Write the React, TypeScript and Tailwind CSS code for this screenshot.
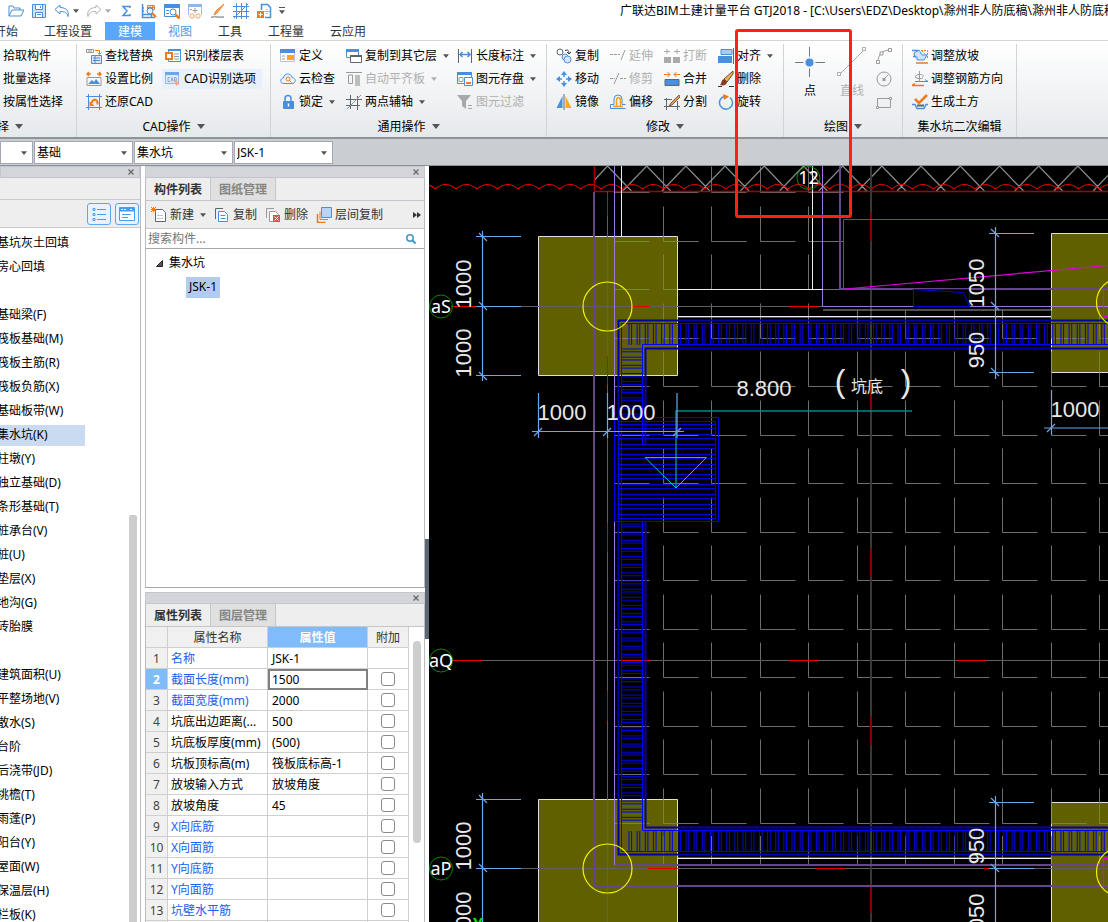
import type { ReactNode } from 'react';

const B = '#4a8fdd';
const O = '#ee7a1c';
const G = '#9a9a9a';
const K = '#5c6670';

const icons: Record<string, ReactNode> = {
  open: <path d="M1 13V3h4l1 2h6v2M1 13l3-6h12l-3 6z" stroke={B} />,
  save: <><path d="M1.5 1.5h13v13h-13z" stroke={B} fill="#cfe2f8" /><path d="M4.500 1.500h7v5h-7zM4.500 9.500h7v5h-7z" stroke={B} fill="#fff" /><path d="M9.500 3v2M6 11.500h4" stroke={B} /></>,
  undo: <path d="M6 2L1 6.500 6 11V8.500c5 0 7 1 8 5C15.500 8 12 4.500 6 4.500z" stroke={B} />,
  redo: <path d="M10 2l5 4.500-5 4.500V8.500c-5 0-7 1-8 5C.5 8 4 4.500 10 4.500z" stroke="#b4b4b4" />,
  sum: <path d="M12 5V3.500H5L9 8l-4 4.500h7V11" stroke={B} strokeWidth="1.500" />,
  ruler: <><path d="M1.500 1v13.500H14M1.500 11.500h9v3M1 5h2M1 8h2" stroke={B} strokeWidth="1.500" /><path d="M6.500 2.500h7v4h-7zM9 2v4M11.500 2v4M6 4.500h8" stroke={O} /><circle cx="9" cy="8" r="3" stroke={B} fill="#e4effc" /><path d="M11 10l4 4" stroke={O} strokeWidth="2" /></>,
  find: <><path d="M.5 1.500h15v12H.5z" stroke={B} /><path d="M0 1h16v4H0z" fill={B} /><path d="M2 7.500h3M2 10.500h3" stroke={B} /><circle cx="9" cy="9" r="3" stroke={B} fill="#fff" /><path d="M11.500 11.500l4 4" stroke={O} strokeWidth="2.500" /></>,
  glasses: <><path d="M1.500 1v11M14.500 1v11" stroke="#9bbfe8" /><path d="M1 1h14v3H1z" fill="#8db8ea" /><path d="M8 5v5M5.500 7.500h5M3 6.500h2" stroke={G} /><circle cx="5" cy="13" r="2.200" stroke="#f2a163" /><circle cx="11" cy="13" r="2.200" stroke="#f2a163" /></>,
  brush: <><path d="M14 1L7 10l-3 2 2-4z" stroke={O} fill="#f7b374" /><path d="M1 14.500c3-1.500 5 0 13-.5" stroke={K} /></>,
  mesh: <path d="M3.500 0v16M8.500 0v16M13.500 0v16M0 3.500h16M0 8.500h16M0 13.500h16M1 15L15 1" stroke={B} />,
  docAdd: <><path d="M5.500 7V1.500h6l3 3v10H9" stroke={B} strokeWidth="1.500" /><path d="M1 8h7v7H1z" fill={O} /><path d="M2.500 11.500h4M4.500 9.500v4" stroke="#fff" /><path d="M11 6v5M8.500 8.500h5" stroke={B} strokeDasharray="1 1" /></>,
  replace: <><path d="M.5 1.500h7v3h-7zM3 1.500v3M5 1.500v3" stroke={G} /><path d="M9 2.500h4.500V6M11.500 4.500l2 2 2-2" stroke={O} /><path d="M5.500 7.500h10v8h-10z" stroke={B} fill="#d8e8fa" /><path d="M7 10h7M7 12.500h7M9 8v7" stroke={B} /></>,
  scale: <><path d="M1 3h4M3 1L1 3l2 2M15 3h-4M13 1l2 2-2 2" stroke={O} strokeWidth="1.500" /><path d="M1 6.500h14v8H1z" stroke={G} fill="#f4f8fd" /><path d="M2 13l4-4 2 2 2-3 4 5z" fill={B} /></>,
  restore: <><path d="M2.500 0v16M13.500 0v16M0 2.500h16M0 13.500h16" stroke={B} /><path d="M3.500 7v5h5z" fill={O} /><path d="M5.500 9C7 4 12 5 11.500 10.500" stroke={O} strokeWidth="2" /></>,
  floorTable: <><path d="M3.500 1.500h12v12h-12z" stroke={B} /><path d="M3 1h13v2H3z" fill={B} /><path d="M1 5h6v6H1z" fill="#fff" stroke={O} strokeWidth="2" /><path d="M9 6h5M9 8.500h5M9 11h5" stroke={G} /></>,
  cadOpt: <><path d="M.5 1.500h13v11H.5z" stroke="#8db8ea" fill="#dceafb" /><path d="M0 1h14v3H0z" fill="#6ba6ea" /><path d="M5 6.500H3v4h2M6 10.500l1-4 1 4M9.500 6.500v4h1.500l.5-2-.5-2z" stroke="#8ba9cf" /><path d="M10 8l5 5-2.500.5-1.500 2z" fill="#f4a98a" /></>,
  define: <><path d="M.5 1.500h14v12H.5z" stroke="#b9c4d0" fill="#fff" /><path d="M0 1h15v4H0z" fill={B} /><path d="M7 7h7v5H7z" fill="#f6a52e" /><path d="M2 8h3M2 11h3" stroke={G} /></>,
  cloud: <><path d="M4 12.500C-.5 12.500 0 7 3.500 7 4 1.500 11.500 2 12 6.500c4.500.5 4 6 0 6z" stroke={B} fill="#eef5fd" /><circle cx="8" cy="8" r="2" stroke={O} /><path d="M9.500 9.500l2 2" stroke={O} /></>,
  lock: <><path d="M5 7V4.500a3 3 0 016 0V7" stroke={B} strokeWidth="1.500" /><rect x="3" y="7" width="11" height="8" rx="1" fill={B} /><path d="M8.500 9.500v3" stroke="#fff" strokeWidth="1.500" /></>,
  copyLayer: <><path d="M.5 1.500h12v8H.5z" stroke={B} fill="#fff" /><path d="M0 1h13v3H0z" fill={B} /><path d="M4.500 7.500h11v7h-11z" stroke={K} fill="#fff" /><path d="M4 7h12v2H4z" fill={K} /></>,
  align: <><path d="M0 1.500h16" stroke={G} /><path d="M2.500 4h4v8.500h-4z" stroke={G} /><path d="M9 4h5v11H9z" fill="#bdbdbd" /></>,
  axis: <><path d="M4.500 1v14M11.500 2v14M0 5.500h16M0 11.500h14" stroke={K} /><path d="M1 15L15 1" stroke={O} /></>,
  dim: <><path d="M1.500 1v14M14.500 1v14" stroke={K} /><path d="M3 6.500h10M5.500 4L3 6.500 5.500 9M10.500 4L13 6.500 10.500 9" stroke={B} strokeWidth="1.500" /></>,
  store: <><path d="M.5 1.500h14v11H.5z" stroke={B} fill="#fff" /><path d="M0 1h15v3H0z" fill={B} /><path d="M2 6.500h4v4H2z" stroke={G} /><path d="M7.500 6.500h8v8h-8z" stroke={B} fill="#fff" /><path d="M9 12h5" stroke={O} strokeWidth="2" /></>,
  filter: <><path d="M0 1h14L9 7v8l-4-3V7z" fill="#a9a9a9" /><path d="M11 11.500h4M11 14.500h4" stroke="#a9a9a9" /></>,
  copy: <><circle cx="4" cy="4" r="3" stroke={K} /><path d="M9 2.500c3-1 4 0 4 3M11 4l2 2 2-2" stroke="#333" /><circle cx="9" cy="9" r="3" stroke={B} fill="#d8e8fa" /><circle cx="11.500" cy="11.500" r="3.500" stroke={B} fill="#d8e8fa" /></>,
  move: <><path d="M8 0l3 4H5zM8 16l3-4H5zM0 8l4-3v6zM16 8l-4-3v6z" fill={B} /><path d="M8 4v2M8 10v2M4 8h2M10 8h2" stroke={B} strokeWidth="1.500" /></>,
  mirror: <><path d="M6.500 2v12H.5z" fill={B} /><path d="M9.500 2v12h6z" fill="#f7ab20" /><path d="M8 0v16" stroke={K} /></>,
  extend: <><path d="M0 6.500h10" strokeDasharray="3 1" stroke={G} /><path d="M15 2l-4 10" stroke={G} /></>,
  trim: <><path d="M0 7.500h5M10 7.500h6" stroke={G} strokeDasharray="3 1" /><path d="M9 2L4 13" stroke={G} /></>,
  offset: <><path d="M.5 14.500h15M.5 14.500v-4h3.500V5a4 4 0 018 0v5.500h3.500" stroke={B} /><path d="M3 12.500h10M6.500 12V6c0-3 4-3 4 0v6" stroke="#f7a01f" strokeWidth="1.500" /></>,
  brk: <><path d="M0 9h7v6H0zM9 9h7v6H9z" fill="#aaa" /><path d="M0 3.500h6M3 1v5M10 3.500h6M13 1v5" stroke="#aaa" /></>,
  merge: <><path d="M1 8.500h14v6H1z" fill={B} stroke={K} /><path d="M0 3.500h6M3.500 1L6 3.500 3.500 6M16 3.500h-6M12.500 1L10 3.500 12.500 6" stroke={O} /></>,
  split: <><path d="M2.500 4v12M0 5.500h8M0 12.500h16M13.500 7v9" stroke={K} /><path d="M15 1L7 9l-2 3 3-1 8-8z" stroke="#8d5b33" fill="#d9a06b" /></>,
  alignTo: <><path d="M3 1.500h11v5H3z" fill="#a9cbf2" stroke={B} /><path d="M0 8h14v7H0z" fill={B} /><path d="M15.500 0v16" stroke={K} /></>,
  del: <><path d="M15 0L6 8l3 3 6-8z" fill="#f0b052" stroke="#6b4a2b" /><path d="M6 8c-3 1-2 4-4 6 3 1 7 0 7-3z" fill="#8a3a22" /><path d="M0 15.500h4M11 15.500h5" stroke="#333" /></>,
  rotate: <><path d="M6 2.500a6.500 6.500 0 106 1" stroke={B} strokeWidth="1.500" /><path d="M5 0l6 2.500L6 6z" fill={O} /></>,
  arc: <><path d="M2 14C2 7 6 2 14 2" stroke={G} /><path d="M.5 12.500h3v3h-3zM4 4h3v3H4zM12.500.5h3v3h-3z" fill="#fff" stroke={G} /></>,
  circle: <><circle cx="8" cy="8" r="7" stroke={G} /><path d="M8 8l4-4" stroke={G} /><path d="M6.500 7h3v3h-3z" fill={G} /></>,
  rect: <><path d="M1.500 4.500h13v9h-13z" stroke={G} /><path d="M.5 12.500h2v2h-2zM13.500 3.500h2v2h-2z" fill="#fff" stroke={G} /></>,
  slope: <><path d="M2 5l5-3 3 5h5l-3 5H5V9H3z" fill="#cfe3fa" stroke={B} /><path d="M0 2.500h6M1 8.500h3" stroke={B} strokeWidth="1.500" /><path d="M9 2.500h6.500V10M10 3l5 5" stroke={O} strokeDasharray="2 1" /><path d="M4 15h12" stroke={O} strokeWidth="1.500" /></>,
  bar: <><path d="M7.500 0v10M4 7C1 3 13 2 11 6M3 6c2 2 6 2 8 1" stroke={G} /><path d="M3 10.500h13M13 8.500l3 2" stroke={B} /><path d="M0 14.500h12M3 12.500l-3 2" stroke={O} strokeWidth="1.500" /></>,
  earth: <><path d="M3 5l4 4 8-8" stroke={O} strokeWidth="2.500" /><path d="M0 10.500h3l2 4h7l2-4h2" stroke={B} strokeWidth="1.500" /><path d="M5 11.500h7" stroke={K} strokeWidth="2" /></>,
  add: <><path d="M4.500 2.500h7l3 3v9h-10z" stroke={K} fill="#fff" /><path d="M6 8.500h6M6 11.500h6" stroke="#b9c4d0" /><path d="M0 0l5 5M5 0L0 5M2.500 0v5M0 2.500h5" stroke={O} /></>,
  docCopy: <><path d="M1.500 12V1.500H9" stroke={K} /><path d="M4.500 4.500h6l3 3v7h-9z" stroke={B} fill="#fff" /><path d="M6.500 8.500h5M6.500 11.500h5" stroke={B} /></>,
  docDel: <><path d="M1.500 11V1.500H9" stroke={G} /><path d="M4.500 4.500h6l3 3v7h-9z" stroke={G} fill="#fff" /><path d="M8 8h7v7H8z" fill="#d8504f" /><path d="M9.500 9.500l4 4M13.500 9.500l-4 4" stroke="#fff" /></>,
  layers: <><path d="M1.500 7v8.500h8" stroke={O} strokeWidth="1.500" /><path d="M4 4.500v8h8" stroke={O} /><path d="M5.500.5h10v10h-10z" stroke={B} fill="#b5d5fa" /></>,
};

function Icon({ name }: { name: string }) {
  return (
    <svg width="16" height="16" viewBox="0 0 16 16" fill="none" className="shrink-0" aria-hidden="true">
      {icons[name]}
    </svg>
  );
}

function Caret({ light = false, big = false }: { light?: boolean; big?: boolean }) {
  return (
    <svg width={big ? 8 : 6} height={big ? 5 : 4} viewBox="0 0 8 5" className="shrink-0" aria-hidden="true">
      <path d="M0 0h8L4 5z" fill={light ? '#b0b0b0' : '#555'} />
    </svg>
  );
}

type Tool = { icon?: string; label: string; off?: boolean; caret?: boolean; on?: boolean };

function ToolButton({ icon, label, off, caret, on }: Tool) {
  return (
    <button className={`flex h-[23px] items-center ${off ? 'text-[#b0b0b0]' : 'text-black'}`}>
      <span className={`flex h-5 items-center gap-[3px] ${on ? 'bg-[#e6f1fd] -ml-[3px] pl-[3px] pr-[6px]' : ''}`}>
        {icon && <Icon name={icon} />}
        {label}
      </span>
      {caret && <span className="ml-[6px] flex"><Caret light={off} /></span>}
    </button>
  );
}

function Column({ className, tools }: { className?: string; tools: Tool[] }) {
  return (
    <div className={`flex shrink-0 flex-col items-start ${className ?? ''}`}>
      {tools.map((t) => <ToolButton key={t.label} {...t} />)}
    </div>
  );
}

function Group({ className, label, caret = true, children }: { className: string; label: string; caret?: boolean; children: ReactNode }) {
  return (
    <section className={`flex shrink-0 flex-col border-r border-[#d0d3d7] ${className}`}>
      <div className="flex h-[69px] pl-[9px]">{children}</div>
      <div className="flex h-6 items-center justify-center gap-[6px] pt-[3px]">
        {label}
        {caret && <Caret big />}
      </div>
    </section>
  );
}

function TitleBar() {
  return (
    <header className="flex h-[21px] shrink-0 items-center overflow-hidden bg-white pl-2">
      <div className="flex shrink-0 items-center gap-[7px]">
        <button aria-label="打开"><Icon name="open" /></button>
        <button aria-label="保存"><Icon name="save" /></button>
        <button aria-label="撤销" className="flex items-center gap-[3px]"><Icon name="undo" /><Caret /></button>
        <button aria-label="恢复" className="flex items-center gap-[3px]"><Icon name="redo" /><Caret light /></button>
        <button aria-label="汇总"><Icon name="sum" /></button>
        <button aria-label="测量"><Icon name="ruler" /></button>
        <button aria-label="查找"><Icon name="find" /></button>
        <button aria-label="查看"><Icon name="glasses" /></button>
        <button aria-label="格式刷"><Icon name="brush" /></button>
        <button aria-label="网格"><Icon name="mesh" /></button>
        <button aria-label="新增"><Icon name="docAdd" /></button>
        <button aria-label="自定义" className="flex flex-col items-center gap-[2px]"><span className="h-px w-[6px] bg-[#555]" /><Caret /></button>
      </div>
      <h1 className="ml-[335px] whitespace-nowrap">广联达BIM土建计量平台 GTJ2018 - [C:\Users\EDZ\Desktop\滁州非人防底稿\滁州非人防底稿]</h1>
    </header>
  );
}

const tabs = [
  { name: '工程设置', style: 'w-[74px] text-[#333]' },
  { name: '建模', style: 'w-[50px] bg-[#58a7f8] text-white' },
  { name: '视图', style: 'w-[50px] text-[#4a9cf0]' },
  { name: '工具', style: 'w-[50px] text-[#333]' },
  { name: '工程量', style: 'w-[62px] text-[#333]' },
  { name: '云应用', style: 'w-[62px] text-[#333]' },
];

function Ribbon() {
  return (
    <div className="shrink-0">
      <nav className="flex h-5 border-b border-[#d4d7da] bg-white pt-px">
        <button className="-ml-[6px] mr-[13px] w-6 whitespace-nowrap pt-[2px] text-[#333]">开始</button>
        {tabs.map((t) => <button key={t.name} className={`shrink-0 pt-[2px] ${t.style}`}>{t.name}</button>)}
      </nav>
      <div className="flex h-[98px] overflow-hidden whitespace-nowrap border-b-2 border-[#8f9499] bg-linear-to-b from-white to-[#e6e9ec] pt-[3px]">
        <section className="w-[77px] shrink-0 border-r border-[#d0d3d7]">
          <Column className="pl-[3px]" tools={[{ label: '拾取构件' }, { label: '批量选择' }, { label: '按属性选择' }]} />
          <div className="-ml-[15px] flex h-6 items-center gap-[6px] pt-[3px]">选择<Caret big /></div>
        </section>
        <Group className="w-[194px]" label="CAD操作">
          <Column className="w-[79px]" tools={[{ icon: 'replace', label: '查找替换' }, { icon: 'scale', label: '设置比例' }, { icon: 'restore', label: '还原CAD' }]} />
          <Column tools={[{ icon: 'floorTable', label: '识别楼层表' }, { icon: 'cadOpt', label: 'CAD识别选项', on: true }]} />
        </Group>
        <Group className="w-[276px]" label="通用操作">
          <Column className="w-[66px]" tools={[{ icon: 'define', label: '定义' }, { icon: 'cloud', label: '云检查' }, { icon: 'lock', label: '锁定', caret: true }]} />
          <Column className="w-[111px]" tools={[{ icon: 'copyLayer', label: '复制到其它层', caret: true }, { icon: 'align', label: '自动平齐板', off: true, caret: true }, { icon: 'axis', label: '两点辅轴', caret: true }]} />
          <Column tools={[{ icon: 'dim', label: '长度标注', caret: true }, { icon: 'store', label: '图元存盘', caret: true }, { icon: 'filter', label: '图元过滤', off: true }]} />
        </Group>
        <Group className="w-[237px]" label="修改">
          <Column className="w-[54px]" tools={[{ icon: 'copy', label: '复制' }, { icon: 'move', label: '移动' }, { icon: 'mirror', label: '镜像' }]} />
          <Column className="w-[54px]" tools={[{ icon: 'extend', label: '延伸', off: true }, { icon: 'trim', label: '修剪', off: true }, { icon: 'offset', label: '偏移' }]} />
          <Column className="w-[54px]" tools={[{ icon: 'brk', label: '打断', off: true }, { icon: 'merge', label: '合并' }, { icon: 'split', label: '分割' }]} />
          <Column tools={[{ icon: 'alignTo', label: '对齐', caret: true }, { icon: 'del', label: '删除' }, { icon: 'rotate', label: '旋转' }]} />
        </Group>
        <Group className="w-[119px]" label="绘图">
          <button className="flex w-[34px] flex-col items-center pt-[3px]">
            <svg width="30" height="30" viewBox="0 0 30 30" className="shrink-0" aria-hidden="true">
              <path d="M14.500 0v30M0 15.500h30" stroke="#707880" />
              <circle cx="14.500" cy="15.500" r="6" fill="#f4f6f9" />
              <circle cx="14.500" cy="15.500" r="4" fill={B} />
            </svg>
            <span className="mt-[6px]">点</span>
          </button>
          <button className="ml-2 flex w-[34px] flex-col items-center pt-[3px] text-[#b0b0b0]">
            <svg width="30" height="30" viewBox="0 0 30 30" fill="none" stroke="#aaa" className="shrink-0" aria-hidden="true">
              <path d="M3.500 26.500l23-23" /><path d="M.5 25.500h3v3h-3zM25.500.5h3v3h-3z" fill="#fff" />
            </svg>
            <span className="mt-[6px]">直线</span>
          </button>
          <div className="ml-[7px] flex flex-col">
            {['arc', 'circle', 'rect'].map((n) => <button key={n} aria-label={n} className="flex h-[23px] items-center"><Icon name={n} /></button>)}
          </div>
        </Group>
        <Group className="w-[114px]" label="集水坑二次编辑" caret={false}>
          <Column tools={[{ icon: 'slope', label: '调整放坡' }, { icon: 'bar', label: '调整钢筋方向' }, { icon: 'earth', label: '生成土方' }]} />
        </Group>
      </div>
    </div>
  );
}

const filters = [
  { label: '楼层', value: '', style: 'w-[33px]' },
  { label: '构件分类', value: '基础', style: 'w-[99px]' },
  { label: '构件类型', value: '集水坑', style: 'w-[99px]' },
  { label: '构件', value: 'JSK-1', style: 'w-[99px]' },
];

function FilterBar() {
  return (
    <div className="flex h-[27px] shrink-0 items-center gap-px border-b border-[#8b9299] bg-[#cacdd2]">
      {filters.map((f) => (
        <div key={f.label} className={`relative h-[23px] ${f.style}`}>
          <select aria-label={f.label} className="h-full w-full appearance-none border border-[#a3a8b4] bg-white pl-[2px] pt-px">
            <option>{f.value}</option>
          </select>
          <span className="pointer-events-none absolute right-[6px] top-[10px] flex"><Caret /></span>
        </div>
      ))}
    </div>
  );
}

const kinds = [
  '基坑灰土回填', '房心回填', '', '基础梁(F)', '筏板基础(M)', '筏板主筋(R)', '筏板负筋(X)', '基础板带(W)', '集水坑(K)',
  '柱墩(Y)', '独立基础(D)', '条形基础(T)', '桩承台(V)', '桩(U)', '垫层(X)', '地沟(G)', '砖胎膜', '',
  '建筑面积(U)', '平整场地(V)', '散水(S)', '台阶', '后浇带(JD)', '挑檐(T)', '雨蓬(P)', '阳台(Y)', '屋面(W)', '保温层(H)', '栏板(K)',
];

function CloseStrip() {
  return (
    <div className="flex h-3 shrink-0 items-center justify-end border border-[#c3c6cc] bg-[#d4d5da] pr-[5px]">
      <button aria-label="关闭" className="flex">
        <svg width="6" height="6" viewBox="0 0 6 6" stroke="#666" strokeWidth="1.200" aria-hidden="true"><path d="M.5.5l5 5M5.500.5l-5 5" /></svg>
      </button>
    </div>
  );
}

function KindPanel() {
  return (
    <aside className="flex w-[141px] shrink-0 flex-col overflow-hidden border-r border-[#b8bbc0] bg-white">
      <CloseStrip />
      <div className="h-[22px] shrink-0 border-b border-[#c9cbd0] bg-[#eee]" />
      <div className="flex h-7 shrink-0 items-center justify-end gap-1 border-b border-[#c9cbd0] bg-[#eee] pr-px">
        <button aria-label="列表" className="flex h-[22px] w-6 items-center justify-center rounded-[3px] border border-[#5aa7f5] bg-[#e8f3ff]">
          <svg width="14" height="14" viewBox="0 0 14 14" fill="none" stroke="#4a9cf0" aria-hidden="true">
            <path d="M5 2.500h9M5 7.500h9M5 12.500h9M1 1.500h2v2H1zM1 6.500h2v2H1zM1 11.500h2v2H1z" />
          </svg>
        </button>
        <button aria-label="视图" className="flex h-[22px] w-6 items-center justify-center rounded-[3px] border border-[#5aa7f5] bg-[#e8f3ff]">
          <svg width="16" height="14" viewBox="0 0 16 14" fill="none" stroke="#4a9cf0" aria-hidden="true">
            <path d="M.5.5h15v13H.5z" fill="#fff" /><path d="M1 1h14v3H1z" fill="#4a9cf0" /><path d="M2 2.500h6M11 2.500h3" stroke="#fff" strokeDasharray="2 1" /><path d="M3 7.500h9M3 10.500h6" />
          </svg>
        </button>
      </div>
      <div className="flex min-h-0 flex-1">
        <ul className="flex-1 overflow-hidden pt-[3px]">
          {kinds.map((k, i) => (
            <li key={i} className="flex h-6 items-center whitespace-nowrap">
              <span className={`h-[21px] leading-5 ${k === '集水坑(K)' ? 'w-[85px] bg-[#c9daf1]' : ''}`}>
                <span className="-ml-[3px]">{k}</span>
              </span>
            </li>
          ))}
        </ul>
        <div className="mr-[3px] w-2 shrink-0 pt-[287px]"><div className="h-full rounded-t-[2px] bg-[#cdcdcd]" /></div>
      </div>
    </aside>
  );
}

function PanelTabs({ names }: { names: [string, string] }) {
  return (
    <div className="flex h-[23px] shrink-0 border-b border-[#c3c6cc] bg-[#eee] font-bold">
      <button className="w-[65px] border-r border-[#c3c6cc] pt-[2px] text-[#333]">{names[0]}</button>
      <button className="w-[65px] border-r border-[#c3c6cc] bg-[#e0e0e0] pt-[2px] text-[#858585]">{names[1]}</button>
    </div>
  );
}

function ComponentPanel() {
  return (
    <section className="flex min-h-0 flex-[422] flex-col border-b border-[#a7a9ad]">
      <CloseStrip />
      <div className="flex min-h-0 flex-1 flex-col border-x border-[#b8bbc0]">
        <PanelTabs names={['构件列表', '图纸管理']} />
        <div className="flex h-7 shrink-0 items-center border-b border-[#c3c6cc] bg-[#eee] pl-[5px] pr-[3px] pt-px text-[#333]">
          <button className="flex items-center gap-[3px]"><Icon name="add" />新建<span className="ml-[3px] flex"><Caret /></span></button>
          <button className="ml-2 flex items-center gap-[3px]"><Icon name="docCopy" />复制</button>
          <button className="ml-2 flex items-center gap-[3px]"><Icon name="docDel" />删除</button>
          <button className="ml-2 flex items-center gap-[3px]"><Icon name="layers" />层间复制</button>
          <button aria-label="更多" className="ml-auto">
            <svg width="8" height="6" viewBox="0 0 8 6" aria-hidden="true"><path d="M0 0l4 3-4 3zM4 0l4 3-4 3z" fill="#333" /></svg>
          </button>
        </div>
        <div className="flex h-5 shrink-0 items-center border-b border-[#a7a9ad] pl-[2px] pr-2">
          <input aria-label="搜索构件" placeholder="搜索构件..." className="min-w-0 flex-1 outline-none placeholder:text-[#777]" />
          <svg width="10" height="10" viewBox="0 0 10 10" fill="none" stroke="#3c97c9" strokeWidth="1.500" aria-hidden="true"><circle cx="4" cy="4" r="3.200" /><path d="M6.500 6.500l3 3" strokeWidth="2" /></svg>
        </div>
        <div className="flex-1 pt-[2px]">
          <div className="flex h-6 items-center gap-[6px] pl-[10px]">
            <svg width="7" height="7" viewBox="0 0 7 7" aria-hidden="true"><path d="M6.500.5v6h-6z" fill="#555" stroke="#222" /></svg>
            集水坑
          </div>
          <div className="flex h-6 items-center pl-10"><span className="h-[21px] bg-[#b1ccee] px-[3px] leading-5">JSK-1</span></div>
        </div>
      </div>
    </section>
  );
}

const props = [
  { name: '名称', value: 'JSK-1', blue: true },
  { name: '截面长度(mm)', value: '1500', blue: true },
  { name: '截面宽度(mm)', value: '2000', blue: true },
  { name: '坑底出边距离(...', value: '500' },
  { name: '坑底板厚度(mm)', value: '(500)' },
  { name: '坑板顶标高(m)', value: '筏板底标高-1' },
  { name: '放坡输入方式', value: '放坡角度' },
  { name: '放坡角度', value: '45' },
  { name: 'X向底筋', value: '', blue: true },
  { name: 'X向面筋', value: '', blue: true },
  { name: 'Y向底筋', value: '', blue: true },
  { name: 'Y向面筋', value: '', blue: true },
  { name: '坑壁水平筋', value: '', blue: true },
  { name: '坑壁垂直筋', value: '', blue: true },
];

function PropertyPanel() {
  const cell = 'h-[21px] border-b border-r border-[#cfcfcf] p-0';
  return (
    <section className="mt-1 flex min-h-0 flex-[330] flex-col overflow-hidden">
      <CloseStrip />
      <div className="flex min-h-0 flex-1 flex-col border-x border-[#b8bbc0]">
        <PanelTabs names={['属性列表', '图层管理']} />
        <div className="flex min-h-0 flex-1 overflow-hidden">
          <table className="w-[263px] table-fixed border-separate border-spacing-0 self-start whitespace-nowrap">
            <colgroup><col className="w-[22px]" /><col className="w-[100px]" /><col className="w-[100px]" /><col className="w-[41px]" /></colgroup>
            <thead>
              <tr className="bg-[#f0f0f0] text-[#333]">
                <th className={cell} />
                <th className={`${cell} pt-[2px] font-normal`}>属性名称</th>
                <th className={`${cell} bg-[#80bbfb] pt-[2px] text-white`}>属性值</th>
                <th className={`${cell} pt-[2px] font-normal`}>附加</th>
              </tr>
            </thead>
            <tbody>
              {props.map((p, i) => (
                <tr key={p.name}>
                  <th className={`${cell} pt-[2px] ${i === 1 ? 'bg-[#80bbfb] text-white' : 'bg-[#f0f0f0] font-normal text-[#444]'}`}>{i + 1}</th>
                  <td className={`${cell} overflow-hidden pl-[3px] pt-[2px] ${p.blue ? 'text-[#2060f0]' : ''}`}>{p.name}</td>
                  <td className={`${cell} pl-1 pt-[2px] ${i === 1 ? 'outline-2 -outline-offset-2 outline-[#808080]' : ''}`}>{p.value}</td>
                  <td className={`${cell} text-center`}>
                    {i > 0 && <input type="checkbox" aria-label={p.name} className="mx-auto block size-[14px] appearance-none rounded-[3px] border border-[#8a8a8a] bg-white" />}
                  </td>
                </tr>
              ))}
            </tbody>
          </table>
          <div className="ml-1 h-full pt-[14px]"><div className="h-[202px] w-2 rounded-full bg-[#cdcdcd]" /></div>
        </div>
      </div>
    </section>
  );
}

const range = (n: number) => Array.from({ length: n }, (_, i) => i);

// all plan coordinates share one drawing space, shifted to the viewport below
const scallops = range(34).map((i) => `M${414.5 + i * 20.75} 189q10.400-9 20.750 0`).join('');
const fence = range(14).map((i) => `M${607.5 + i * 39.2} 166l24 25M${607.5 + i * 39.2} 166l${i ? '-24 25' : '-13 14'}`).join('');

const gridDashes = range(14).flatMap((r) => range(11).map((c) => {
  const x = Math.floor(614.8 + c * 48.5) + 0.5;
  const y = Math.floor(192.8 + r * 48.5) + 0.5;
  if (y < 310 && x > 823) return '';
  const up = c === 0 ? '' : r === 0 ? 'v-26' : x > 823 && r === 3 ? 'v-28' : 'v-35';
  return `M${x} ${y}${up}M${x} ${y}h35`;
})).join('') + range(10).map((c) => `M${Math.floor(663.3 + c * 48.5) + 0.5} 836v29`).join('');

const vTicks = (y: number, h: number) => range(60).map((i) => `M${629 + i * 8.15} ${y}v${h}M${631.6 + i * 8.15} ${y}v${h}`).join('');
const hTicks = (y: number, n: number) => range(n).map((i) => `M621.500 ${y + i * 8.15}h21M621.500 ${y + 2.8 + i * 8.15}h21`).join('');
const sumpLines = range(10).map((i) => `M618.500 ${424.5 + i * 10}h97M618.500 ${428.5 + i * 10}h97`).join('');

function DimText({ x, y, children, turn = true }: { x: number; y: number; children: string; turn?: boolean }) {
  return (
    <text x={x} y={y} fontSize="22" textAnchor="middle" fill="#e8e8e8" fontFamily="'Liberation Sans', sans-serif" transform={turn ? `rotate(-90 ${x} ${y})` : undefined}>{children}</text>
  );
}

function AxisHead({ x, y, label }: { x: number; y: number; label: string }) {
  return (
    <g>
      <circle cx={x} cy={y} r="11.500" stroke="#008a00" />
      <text x={x} y={y + 6} fontSize="18" textAnchor="middle" fill="#fff" fontFamily="'Noto Sans', sans-serif">{label}</text>
    </g>
  );
}

function Plan() {
  return (
    <main className="min-w-0 flex-1 overflow-hidden bg-black">
      <svg className="block h-full w-full" fill="none" role="img" aria-label="平面图">
        <g transform="translate(-429 -166)">
          <g fill="#606000" stroke="#e0e0e0">
            <path d="M538.500 236.500h139v139h-139zM538.500 799.500h139v139h-139zM1051.500 233.500h139v139h-139zM1051.500 802.500h139v139h-139z" />
          </g>
          <path d={gridDashes} stroke="#808080" strokeOpacity=".85" />
          <path d={fence} stroke="#8c8c8c" strokeWidth="1.200" />
          <path d={scallops} stroke="#e00000" strokeWidth="1.200" />
          <path d="M594.500 166v25.500H2000" stroke="#a80000" strokeWidth="1.500" />

          <path d="M607.500 192V2000M482 306.500h341M452 660.500H2000M482 868.500H2000" stroke="#606060" />
          <path d="M871 166V2000" stroke="#383838" strokeWidth="2" />
          <path d="M607.500 191v25M607.500 356v29M607.500 523v29M607.500 691v30M451 306.500h26M632 306.500h18M789 306.500h29M452 660.500h30M621 660.500h29M789 660.500h29M957 660.500h29M648 868.500h29M816 868.500h29M984 868.500h6" stroke="#e80000" />
          <path d="M871 212v29M871 380v30M871 548v29M871 716v29M871 884v29" stroke="#860000" strokeWidth="2" />

          <path d="M594 192V886H2000M615 865H2000M840 166V289H2000" stroke="#65458c" strokeWidth="2" />
          <path d="M614.500 166V865M822.500 166V306.500H2000" stroke="#a671e0" />
          <path d="M843.500 289v-69.500H2000" stroke="#46588c" />
          <path d="M823 310h228M677 317h374M677 858h374" stroke="#a0a0a0" />
          <path d="M621.500 166v70M621.500 445v75M677 289.500h146M812.500 166v123M677 858.500h374M677 316.500h374" stroke="#eee" />
          <path d="M845 289L1108 265.500l200-18M1103.500 289.500h20v27h-20zM1103.500 858.500h20v27h-20z" stroke="#e000e0" strokeWidth="1.200" />

          <path d={vTicks(324, 21) + vTicks(831, 20) + hTicks(349, 9) + hTicks(524, 37)} stroke="#0000e8" />
          <path d="M2000 320.500H618.500V854.500H2000M645.500 445V348.500H2000M645.500 521v306.500H2000" stroke="#0000a8" strokeWidth="2" />
          <path d="M2000 323.500H621.500V851.500H2000M642.500 445V344.500H2000M642.500 521v309.500H2000" stroke="#0000ff" />
          <path d={sumpLines} stroke="#0000d8" />
          <path d="M618.500 421.500h97v97h-97zM614.500 417.500h104v104h-104z" stroke="#0000f0" />
          <path d="M913.500 289.500h56v17h-56zM913.500 289.500l50 3 6 14" stroke="#0000d8" />

          <g stroke="#f2f200" strokeWidth="1.200">
            <circle cx="607.500" cy="306.500" r="24.500" /><circle cx="607.500" cy="868.500" r="24.500" />
            <circle cx="1121" cy="302.500" r="24.500" /><circle cx="1121" cy="872" r="24.500" />
          </g>

          <path d="M912 411H676v77" stroke="#008686" strokeWidth="1.500" />
          <path d="M645 457.500h61.500L676 488z" stroke="#00c8c8" />

          <g stroke="#6aa8ea" strokeWidth="1.200">
            <path d="M482.500 231v150M476 236.500h45M476 306.500h45M476 375.500h45M482.500 793v200M476 799.500h45M476 868.500h45" />
            <path d="M995.500 227v152M989 233.500h45M989 372.500h45M995.500 796v200M989 802.500h45M989 868.500h45" />
            <path d="M532 431.500h152M538.500 393v45M607.500 393v45M677 393v45M1044 428h200M1051.500 390v45" />
            <path d="M479 233l8 8M479 302l8 8M479 372l8 8M479 795l8 8M479 864l8 8M991 229l8 8M991 302l8 8M991 368l8 8M991 798l8 8M991 864l8 8M534 436l8-8M603 436l8-8M673 436l8-8M1047 432l8-8" />
          </g>

          <DimText x={471} y={284}>1000</DimText>
          <DimText x={471} y={353}>1000</DimText>
          <DimText x={471} y={846}>1000</DimText>
          <DimText x={471} y={916}>1000</DimText>
          <DimText x={984} y={283}>1050</DimText>
          <DimText x={984} y={350}>950</DimText>
          <DimText x={984} y={846}>950</DimText>
          <DimText x={984} y={918}>1050</DimText>
          <DimText x={562} y={420} turn={false}>1000</DimText>
          <DimText x={631} y={420} turn={false}>1000</DimText>
          <DimText x={1075} y={417} turn={false}>1000</DimText>
          <DimText x={764} y={396} turn={false}>8.800</DimText>
          <text x="840" y="392" fontSize="32" textAnchor="middle" fill="#e8e8e8" fontFamily="'Liberation Sans', sans-serif">(</text>
          <text x="867" y="392" fontSize="16" textAnchor="middle" fill="#e8e8e8" fontFamily="'Noto Sans CJK SC', sans-serif">坑底</text>
          <text x="906" y="392" fontSize="32" textAnchor="middle" fill="#e8e8e8" fontFamily="'Liberation Sans', sans-serif">)</text>

          <AxisHead x={441} y={306.5} label="aS" />
          <AxisHead x={441} y={660.5} label="aQ" />
          <AxisHead x={441} y={868.5} label="aP" />
          <AxisHead x={808.5} y={178} label="12" />
          <text x="478" y="930" fontSize="16" textAnchor="middle" fill="#00e000" fontWeight="bold" fontFamily="'Noto Sans', sans-serif">Y</text>
        </g>
      </svg>
    </main>
  );
}

export default function App() {
  return (
    <div className="relative flex h-screen flex-col overflow-hidden bg-white font-['Noto_Sans','Noto_Sans_CJK_SC',sans-serif] text-xs text-black">
      <TitleBar />
      <Ribbon />
      <FilterBar />
      <div className="flex min-h-0 flex-1">
        <KindPanel />
        <div className="ml-1 flex w-[280px] shrink-0 flex-col">
          <ComponentPanel />
          <PropertyPanel />
        </div>
        <div className="flex w-1 shrink-0 items-center bg-white pt-[90px]">
          <div className="h-[100px] w-full bg-[#5d6773]" />
        </div>
        <Plan />
      </div>
      <div className="pointer-events-none absolute left-[735px] top-[29px] h-[189px] w-[117px] rounded-[3px] border-3 border-[#ff2113]" />
    </div>
  );
}
